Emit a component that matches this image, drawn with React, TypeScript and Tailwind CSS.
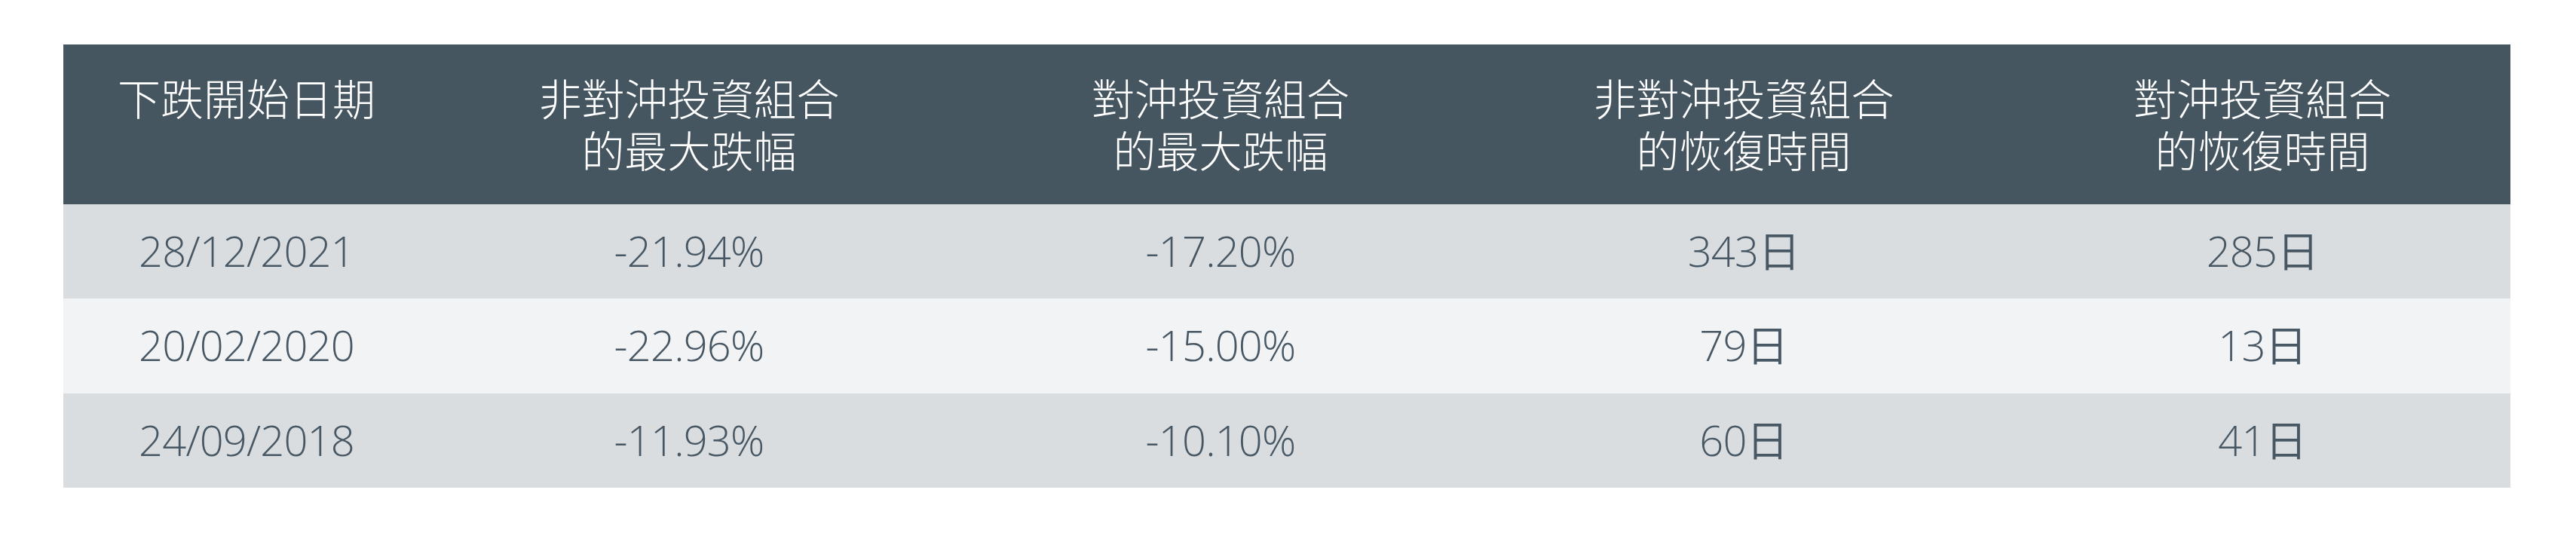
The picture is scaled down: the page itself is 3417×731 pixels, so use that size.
const headers: string[][] = [
  ["下跌開始日期"],
  ["非對沖投資組合", "的最大跌幅"],
  ["對沖投資組合", "的最大跌幅"],
  ["非對沖投資組合", "的恢復時間"],
  ["對沖投資組合", "的恢復時間"],
];

const rows: string[][] = [
  ["28/12/2021", "-21.94%", "-17.20%", "343日", "285日"],
  ["20/02/2020", "-22.96%", "-15.00%", "79日", "13日"],
  ["24/09/2018", "-11.93%", "-10.10%", "60日", "41日"],
];

const grid = "grid grid-cols-[486px_688px_722px_666px_684px]";

export default function App() {
  return (
    <div className="min-h-[731px] w-[3417px] bg-white pt-[59px] pl-[84px]">
      <div className="w-[3246px]">
        <div className={`${grid} h-[212px] bg-[#465661]`}>
          {headers.map((lines, i) => (
            <div
              key={i}
              className={`pt-[35px] text-center text-[57px] leading-[69px] font-light text-white [font-family:'Noto_Sans_CJK_TC',sans-serif] ${i === 4 ? "pl-[26px]" : ""}`}
            >
              <p>
                {lines[0]}
                {lines[1] ? (
                  <>
                    <br />
                    {lines[1]}
                  </>
                ) : null}
              </p>
            </div>
          ))}
        </div>
        {rows.map((row, r) => (
          <div
            key={r}
            className={`${grid} ${r === 1 ? "h-[126px] bg-[#f2f3f5]" : "h-[125px] bg-[#d9dde0]"}`}
          >
            {row.map((cell, i) => (
              <div
                key={i}
                className={`flex items-center justify-center pb-[4px] text-[56px] font-[350] tracking-[-0.8px] text-[#475763] [font-family:'Open_Sans','Noto_Sans_CJK_TC',sans-serif] ${i === 4 ? "pl-[26px]" : ""}`}
              >
                {cell}
              </div>
            ))}
          </div>
        ))}
      </div>
    </div>
  );
}
